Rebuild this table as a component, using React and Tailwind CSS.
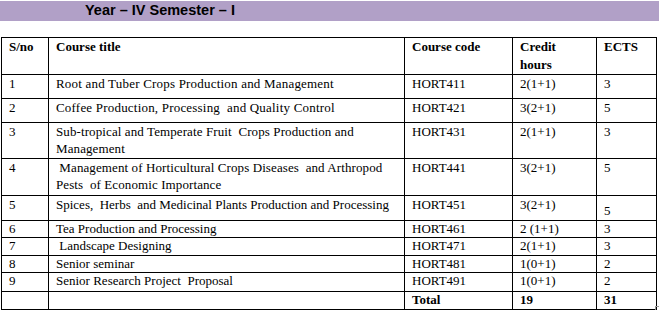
import React from 'react';

const rows = [
  { no: '1', title: 'Root and Tuber Crops Production and Management', code: 'HORT411', credit: '2(1+1)', ects: '3', h: 'h-[24px]', lh: 'leading-[18px]', tr: 'tracking-[0.2px]' },
  { no: '2', title: 'Coffee Production, Processing  and Quality Control', code: 'HORT421', credit: '3(2+1)', ects: '5', h: 'h-[24px]', lh: 'leading-[18px]', tr: 'tracking-[0.2px]' },
  { no: '3', title: 'Sub-tropical and Temperate Fruit  Crops Production and Management', code: 'HORT431', credit: '2(1+1)', ects: '3', h: 'h-[36px]', lh: 'leading-[17px]', tr: 'tracking-[0.1px]' },
  { no: '4', title: '\u00a0Management of Horticultural Crops Diseases  and Arthropod Pests  of Economic Importance', code: 'HORT441', credit: '3(2+1)', ects: '5', h: 'h-[37px]', lh: 'leading-[17px]', tr: 'tracking-[0.1px]' },
  { no: '5', title: 'Spices,  Herbs  and Medicinal Plants Production and Processing', code: 'HORT451', credit: '3(2+1)', ects: '5', h: 'h-[23px]', lh: 'leading-[18px]', tr: '', low: true },
  { no: '6', title: 'Tea Production and Processing', code: 'HORT461', credit: '2 (1+1)', ects: '3', h: 'h-[17px]', lh: 'leading-[15px]', tr: '' },
  { no: '7', title: '\u00a0Landscape Designing', code: 'HORT471', credit: '2(1+1)', ects: '3', h: 'h-[18px]', lh: 'leading-[16px]', tr: '' },
  { no: '8', title: 'Senior seminar', code: 'HORT481', credit: '1(0+1)', ects: '2', h: 'h-[17px]', lh: 'leading-[15px]', tr: '' },
  { no: '9', title: 'Senior Research Project  Proposal', code: 'HORT491', credit: '1(0+1)', ects: '2', h: 'h-[19px]', lh: 'leading-[16px]', tr: '' },
];

const cell = 'border border-black align-top px-[7px] py-0';

const App = () => {
  return (
    <div className="w-[659px] h-[310px] bg-white overflow-hidden relative">
      {/* Semester heading bar */}
      <div className="mt-[1px] h-[20px] bg-[#b1a0c7] pl-[85px] flex items-center">
        <span className="[font-family:'Liberation_Sans',sans-serif] font-bold text-[14.5px] text-black">Year – IV Semester – I</span>
      </div>

      <table className="mt-[16px] ml-[1px] w-[655px] border-collapse table-fixed [font-family:'Liberation_Serif',serif] text-[13px] text-black">
        <colgroup>
          <col className="w-[47px]" />
          <col className="w-[356px]" />
          <col className="w-[108px]" />
          <col className="w-[84px]" />
          <col className="w-[60px]" />
        </colgroup>
        <thead>
          <tr className="h-[37px] font-bold leading-[18px]">
            <td className={cell}>S/no</td>
            <td className={cell}>Course title</td>
            <td className={cell}>Course code</td>
            <td className={cell}>Credit<br />hours</td>
            <td className={cell}>ECTS</td>
          </tr>
        </thead>
        <tbody>
          {rows.map((r) => (
            <tr key={r.no} className={r.h + ' ' + r.lh}>
              <td className={cell}>{r.no}</td>
              <td className={cell + ' whitespace-pre-wrap ' + r.tr}>{r.title}</td>
              <td className={cell}>{r.code}</td>
              <td className={cell}>{r.credit}</td>
              <td className={cell + (r.low ? ' pt-[6px]' : '')}>{r.ects}</td>
            </tr>
          ))}
          <tr className="h-[18px] font-bold leading-[16px]">
            <td className={cell}></td>
            <td className={cell}></td>
            <td className={cell}>Total</td>
            <td className={cell}>19</td>
            <td className={cell}>31</td>
          </tr>
        </tbody>
      </table>
      <div className="absolute left-[655px] top-[306px] w-[4px] h-[4px] border-l border-t border-[#9a9a9a]"></div>
    </div>
  );
};

export default App;
